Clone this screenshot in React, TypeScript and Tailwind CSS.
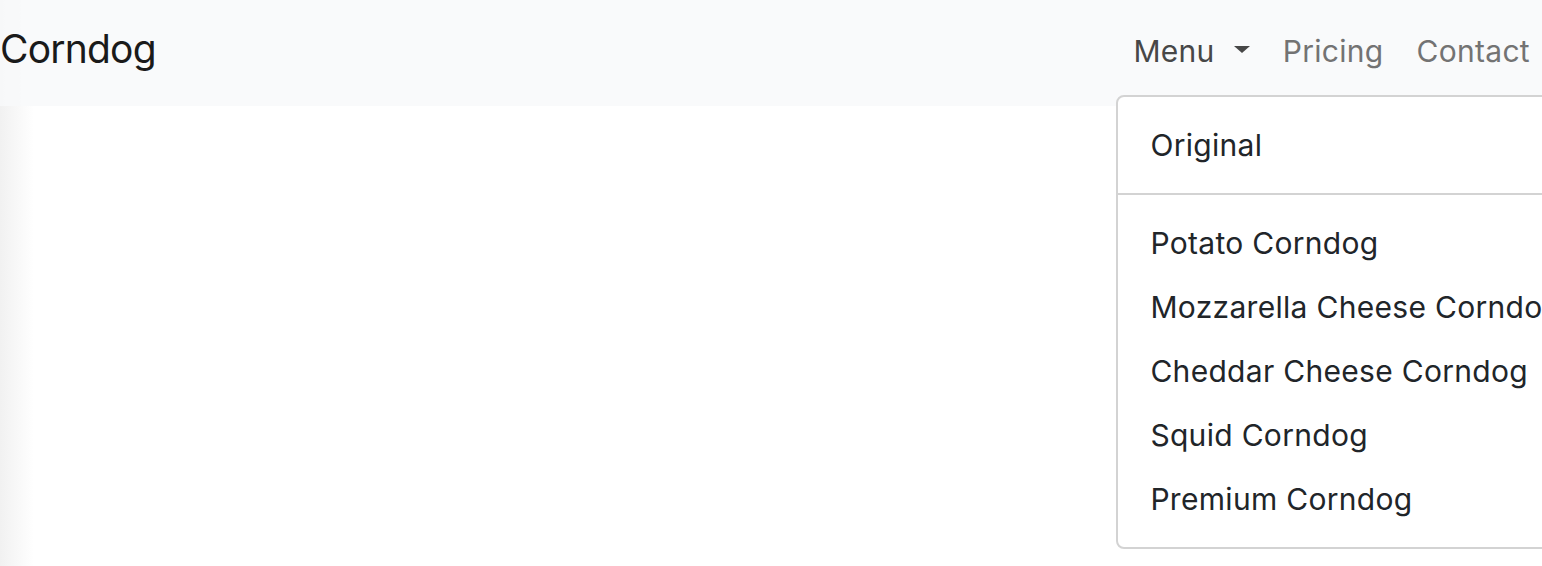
const ITEMS = [
  "Potato Corndog",
  "Mozzarella Cheese Corndog",
  "Cheddar Cheese Corndog",
  "Squid Corndog",
  "Premium Corndog",
];

export default function App() {
  return (
    <div
      className="relative w-[1542px] h-[566px] overflow-hidden bg-white"
      style={{ fontFamily: "Inter, 'Noto Sans', sans-serif" }}
    >
      {/* left edge shade */}
      <div className="absolute left-0 top-0 bottom-0 w-[34px] bg-gradient-to-r from-[#f1f1f1] to-transparent pointer-events-none" />

      {/* NAVBAR */}
      <nav className="relative h-[106px] bg-[#f8f9fa]/85 flex items-center justify-between pb-[5px]">
        <a className="relative mb-[3px] text-[39px] leading-[60px] text-[#1a1a1a] tracking-[-0.8px]">Corndog</a>
        <ul className="flex items-center mr-[-4px] text-[30px] leading-[48px] tracking-[0.3px]">
          <li className="relative">
            <a className="flex items-center px-4 text-[#474747]">
              Menu
              <span className="ml-[19px] mb-[3px] w-0 h-0 border-t-[7px] border-t-[#474747] border-x-[8.5px] border-x-transparent" />
            </a>
            {/* DROPDOWN */}
            <div className="absolute left-[-1px] top-[68px] w-[460px] bg-white border-2 border-[#d3d3d3] rounded-[8px] py-4 text-[#212529]">
              <div className="px-8 py-2 whitespace-nowrap">Original</div>
              <div className="my-4 border-t-2 border-[#d3d3d3]" />
              {ITEMS.map((item) => (
                <div key={item} className="px-8 py-2 whitespace-nowrap">
                  {item}
                </div>
              ))}
            </div>
          </li>
          <li>
            <a className="block px-[17px] text-[#737373]">Pricing</a>
          </li>
          <li>
            <a className="block px-4 text-[#737373]">Contact</a>
          </li>
        </ul>
      </nav>
    </div>
  );
}
